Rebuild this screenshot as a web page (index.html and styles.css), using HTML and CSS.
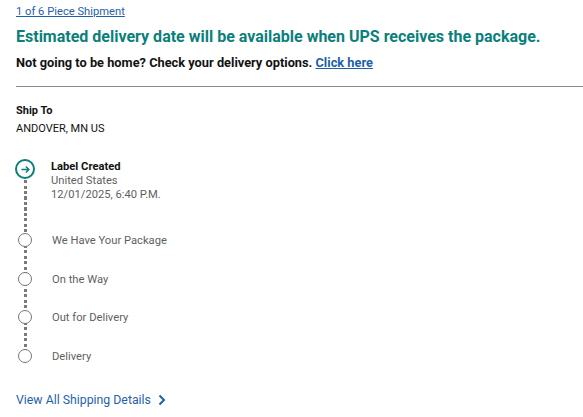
FILE: index.html
```html
<!DOCTYPE html>
<html lang="en">
<head>
<meta charset="utf-8">
<link rel="stylesheet" href="styles.css">
</head>
<body>
<div class="page">
  <a class="piece" href="#">1 of 6 Piece Shipment</a>
  <h1 class="status">Estimated delivery date will be available when UPS receives the package.</h1>
  <p class="options">Not going to be home? Check your delivery options. <a href="#">Click here</a></p>
  <hr class="rule">
  <div class="shipto">
    <div class="label">Ship To</div>
    <div class="addr">ANDOVER, MN US</div>
  </div>
  <ol class="steps">
    <li class="step active">
      <span class="dot"><svg viewBox="0 0 10 10" width="11" height="11"><path d="M1.3 5h6.8M5.3 2.2L8.1 5L5.3 7.8" fill="none" stroke="#0a7f7b" stroke-width="1.3"/></svg></span>
      <div class="info">
        <div class="title">Label Created</div>
        <div class="sub">United States</div>
        <div class="sub">12/01/2025, 6:40 P.M.</div>
      </div>
    </li>
    <li class="step"><span class="dot"></span><div class="info">We Have Your Package</div></li>
    <li class="step"><span class="dot"></span><div class="info">On the Way</div></li>
    <li class="step"><span class="dot"></span><div class="info">Out for Delivery</div></li>
    <li class="step last"><span class="dot"></span><div class="info">Delivery</div></li>
  </ol>
  <a class="details" href="#">View All Shipping Details <svg viewBox="0 0 8 12" width="8" height="12"><path d="M1.5 1.5L6 6L1.5 10.5" fill="none" stroke="#1f5fa8" stroke-width="2"/></svg></a>
</div>
</body>
</html>
```
FILE: styles.css
```css
* { box-sizing: border-box; }
html, body { margin: 0; padding: 0; background: #fff; }
body { font-family: Roboto, "Noto Sans", Arial, sans-serif; color: #121212; }
.page { padding: 5px 0 0 16px; }
.piece { display: block; font-size: 11.2px; color: #1f5fa8; text-decoration: underline; line-height: 14px; }
.status { margin: 8px 0 0; font-size: 16px; font-weight: 700; color: #0a7f7b; line-height: 20px; }
.options { margin: 8px 0 0; font-size: 12.8px; font-weight: 700; line-height: 16px; }
.options a { color: #1f5fa8; text-decoration: underline; }
.rule { margin: 15px 0 0; border: 0; height: 1px; background: #888; }
.shipto { margin-top: 17px; font-size: 11px; line-height: 14px; }
.shipto .label { font-weight: 700; }
.shipto .addr { margin-top: 4px; font-size: 11px; }
.steps { list-style: none; margin: 23px 0 0; padding: 0; }
.step { display: flex; align-items: flex-start; position: relative; min-height: 38.5px; }
.step .dot { flex: none; width: 14px; height: 14px; border: 1.5px solid #777; border-radius: 50%; background: #fff; margin: 0 20px 0 2px; position: relative; z-index: 1; display: flex; align-items: center; justify-content: center; }
.step::before { content: ""; position: absolute; left: 8px; top: 6px; bottom: -6px; width: 3px; background: repeating-linear-gradient(to bottom, #7a7a7a 0 3px, transparent 3px 5.5px); }
.step.last::before { display: none; }
.step .info { font-size: 11.2px; color: #5f5f5f; line-height: 14px; padding-top: 1px; }
.step.active { min-height: 74px; }
.step.active .dot { width: 20px; height: 20px; border: 2.5px solid #0a7f7b; margin: 0 16px 0 -1px; }
.step.active .title { font-weight: 700; color: #121212; }
.step.active .info { padding-top: 1px; }
.step.active::before { top: 10px; }
.details { display: inline-flex; align-items: center; gap: 7px; margin-top: 5px; font-size: 12.3px; color: #1f5fa8; text-decoration: none; line-height: 16px; }
```
